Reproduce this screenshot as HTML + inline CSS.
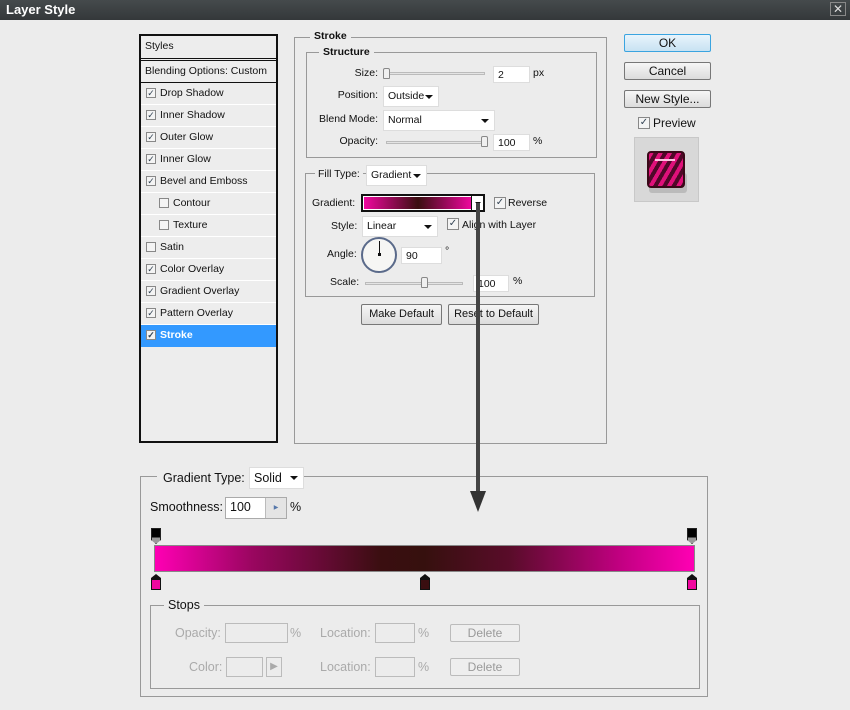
<!DOCTYPE html>
<html><head><style>
*{box-sizing:border-box;margin:0;padding:0;white-space:nowrap}
body{width:850px;height:710px;background:#ececec;font-family:"Liberation Sans",Tahoma,sans-serif;font-size:11px;color:#111;position:relative;overflow:hidden}
.a{position:absolute}
.title{left:0;top:0;width:850px;height:20px;background:linear-gradient(#454a4c,#34383a);color:#fff;font-weight:bold;font-size:13px;padding:2px 6px}
.close{right:4px;top:2px;width:16px;height:14px;border:1px solid #888;color:#ddd;font-size:12px;line-height:12px;text-align:center}
.list{left:139px;top:34px;width:139px;height:409px;border:2px solid #111;background:#ededed}
.row{position:absolute;left:0;width:135px;height:22px;border-bottom:1px solid #fff;font-size:10.5px;line-height:21px;padding-left:19px}
.cb{position:absolute;width:10px;height:10px;border:1px solid #888;background:#f4f4f4;font-size:9px;line-height:8px;color:#345;text-align:center}
.fs{border:1px solid #999}
.lg{position:absolute;background:#ececec;padding:0 4px;font-weight:bold;font-size:10.5px}
.lbl{position:absolute;font-size:10.5px;text-align:right}
.inp{position:absolute;background:#fff;border:1px solid #ddd;font-size:10.5px;padding:2px 4px;height:17px}
.sel{position:absolute;background:#fff;border:1px solid #ddd;font-size:10.5px;padding:3px 4px;height:21px}
.sel:after{content:"";position:absolute;right:5px;top:8px;border:4px solid transparent;border-top:4px solid #111;border-bottom:none}
.btn{position:absolute;border:1px solid #777;border-radius:2px;background:linear-gradient(#f6f6f6,#dcdcdc);font-size:11px;text-align:center}
.track{position:absolute;height:3px;border:1px solid #bbb;background:#e4e4e4}
.thumb{position:absolute;width:7px;height:11px;border:1px solid #888;border-radius:2px 2px 1px 1px;background:#f0f0f0}
.stop{position:absolute;width:10px;height:16px}
</style></head><body>
<div class="a title">Layer Style</div>
<div class="a close">✕</div>

<div class="a list">
 <div class="row" style="top:0;height:22px;padding-left:4px;border-bottom:3px double #111;height:25px">Styles</div>
 <div class="row" style="top:25px;padding-left:4px;border-bottom:1px solid #111">Blending Options: Custom</div>
 <div class="row" style="top:47px"><span class="cb" style="left:5px;top:5px">✓</span>Drop Shadow</div>
 <div class="row" style="top:69px"><span class="cb" style="left:5px;top:5px">✓</span>Inner Shadow</div>
 <div class="row" style="top:91px"><span class="cb" style="left:5px;top:5px">✓</span>Outer Glow</div>
 <div class="row" style="top:113px"><span class="cb" style="left:5px;top:5px">✓</span>Inner Glow</div>
 <div class="row" style="top:135px"><span class="cb" style="left:5px;top:5px">✓</span>Bevel and Emboss</div>
 <div class="row" style="top:157px;padding-left:32px"><span class="cb" style="left:18px;top:5px"></span>Contour</div>
 <div class="row" style="top:179px;padding-left:32px"><span class="cb" style="left:18px;top:5px"></span>Texture</div>
 <div class="row" style="top:201px"><span class="cb" style="left:5px;top:5px"></span>Satin</div>
 <div class="row" style="top:223px"><span class="cb" style="left:5px;top:5px">✓</span>Color Overlay</div>
 <div class="row" style="top:245px"><span class="cb" style="left:5px;top:5px">✓</span>Gradient Overlay</div>
 <div class="row" style="top:267px"><span class="cb" style="left:5px;top:5px">✓</span>Pattern Overlay</div>
 <div class="row" style="top:289px;background:#3399ff;color:#fff;font-weight:bold;border:none"><span class="cb" style="left:5px;top:5px">✓</span>Stroke</div>
</div>

<div class="a fs" style="left:294px;top:37px;width:313px;height:407px"></div>
<div class="lg" style="left:310px;top:30px">Stroke</div>
<div class="a fs" style="left:306px;top:52px;width:291px;height:106px"></div>
<div class="lg" style="left:319px;top:46px">Structure</div>
<div class="lbl" style="left:330px;top:67px;width:48px">Size:</div>
<div class="track" style="left:386px;top:72px;width:99px"></div>
<div class="thumb" style="left:383px;top:68px"></div>
<div class="inp" style="left:493px;top:66px;width:37px">2</div>
<div class="lbl" style="left:533px;top:67px">px</div>
<div class="lbl" style="left:320px;top:89px;width:58px">Position:</div>
<div class="sel" style="left:383px;top:86px;width:56px">Outside</div>
<div class="lbl" style="left:315px;top:113px;width:63px">Blend Mode:</div>
<div class="sel" style="left:383px;top:110px;width:112px">Normal</div>
<div class="lbl" style="left:320px;top:135px;width:58px">Opacity:</div>
<div class="track" style="left:386px;top:141px;width:99px"></div>
<div class="thumb" style="left:481px;top:136px"></div>
<div class="inp" style="left:493px;top:134px;width:37px">100</div>
<div class="lbl" style="left:533px;top:135px">%</div>

<div class="a fs" style="left:305px;top:173px;width:290px;height:124px"></div>
<div class="lbl" style="left:315px;top:168px;background:#ececec;padding:0 3px">Fill Type:</div>
<div class="sel" style="left:366px;top:165px;width:61px">Gradient</div>
<div class="lbl" style="left:312px;top:197px">Gradient:</div>
<div class="a" style="left:361px;top:194px;width:124px;height:18px;border:2px solid #111;background:#fff"><div style="position:absolute;left:1px;top:1px;width:108px;height:12px;background:linear-gradient(90deg,#f0079f,#3a0e10 50%,#f0079f)"></div><div style="position:absolute;right:0;top:0;width:12px;height:14px;border-left:1px solid #111"><div style="position:absolute;left:3px;top:6px;border:3px solid transparent;border-top:3px solid #111;border-bottom:none"></div></div></div>
<div class="cb" style="left:494px;top:197px;width:12px;height:12px;font-size:10px;line-height:10px">✓</div>
<div class="lbl" style="left:508px;top:197px">Reverse</div>
<div class="lbl" style="left:331px;top:220px">Style:</div>
<div class="sel" style="left:362px;top:216px;width:76px">Linear</div>
<div class="cb" style="left:447px;top:218px;width:12px;height:12px;font-size:10px;line-height:10px">✓</div>
<div class="lbl" style="left:462px;top:219px">Align with Layer</div>
<div class="lbl" style="left:327px;top:248px">Angle:</div>
<div class="a" style="left:361px;top:237px;width:36px;height:36px;border:2px solid #5a6a8a;border-radius:50%;background:#f6f6f4"></div>
<div class="a" style="left:379px;top:241px;width:1px;height:14px;background:#111"></div>
<div class="a" style="left:378px;top:253px;width:3px;height:3px;background:#111"></div>
<div class="inp" style="left:401px;top:247px;width:41px">90</div>
<div class="lbl" style="left:445px;top:245px">°</div>
<div class="lbl" style="left:330px;top:276px">Scale:</div>
<div class="track" style="left:365px;top:282px;width:98px"></div>
<div class="thumb" style="left:421px;top:277px"></div>
<div class="inp" style="left:473px;top:275px;width:36px">100</div>
<div class="lbl" style="left:513px;top:275px">%</div>
<div class="btn" style="left:361px;top:304px;width:81px;height:21px;line-height:19px">Make Default</div>
<div class="btn" style="left:448px;top:304px;width:91px;height:21px;line-height:19px">Reset to Default</div>

<div class="btn" style="left:624px;top:34px;width:87px;height:18px;border-color:#3aa4e0;background:linear-gradient(#e8f4fc,#c8e2f2);font-size:12px;line-height:16px">OK</div>
<div class="btn" style="left:624px;top:62px;width:87px;height:18px;font-size:12px;line-height:16px">Cancel</div>
<div class="btn" style="left:624px;top:90px;width:87px;height:18px;font-size:12px;line-height:16px">New Style...</div>
<div class="cb" style="left:638px;top:117px;width:12px;height:12px;font-size:10px;line-height:10px">✓</div>
<div class="lbl" style="left:653px;top:116px;font-size:12px">Preview</div>
<div class="a" style="left:634px;top:137px;width:65px;height:65px;background:#d8d8d8;border:1px solid #c8c8c8"></div>
<div class="a" style="left:649px;top:173px;width:38px;height:20px;background:#bbb;border-radius:3px"></div>
<div class="a" style="left:647px;top:151px;width:38px;height:37px;border-radius:4px;border:2px solid #3a0818;background:repeating-linear-gradient(120deg,#e0107a 0 4px,#500828 4px 8px)"></div>
<div class="a" style="left:655px;top:159px;width:20px;height:2px;background:#ffc0e0"></div>

<div class="a fs" style="left:140px;top:476px;width:568px;height:221px"></div>
<div class="lbl" style="left:157px;top:471px;background:#ececec;padding:0 6px;font-size:12.5px">Gradient Type:</div>
<div class="sel" style="left:249px;top:467px;width:55px;height:22px;font-size:12.5px">Solid</div>
<div class="lbl" style="left:150px;top:500px;font-size:12.5px">Smoothness:</div>
<div class="inp" style="left:225px;top:497px;width:62px;height:22px;font-size:12.5px;border-color:#aaa">100</div>
<div class="a" style="left:265px;top:498px;width:21px;height:20px;background:#e4e4e4;border-left:1px solid #bbb;font-size:6px;color:#57a;text-align:center;line-height:20px">▶</div>
<div class="lbl" style="left:290px;top:500px;font-size:12.5px">%</div>
<div class="a" style="left:154px;top:545px;width:541px;height:27px;border:1px solid #888;background:linear-gradient(90deg,#ff00b4,#9a0660 18%,#3a0e10 42%,#36100e 50%,#5a0c2a 66%,#c00080 86%,#ff00b4)"></div>
<div class="stop" style="left:151px;top:528px;border:1px solid #222;background:linear-gradient(#000 0 60%,#999 60%);clip-path:polygon(0 0,100% 0,100% 75%,50% 100%,0 75%)"></div>
<div class="stop" style="left:687px;top:528px;border:1px solid #222;background:linear-gradient(#000 0 60%,#999 60%);clip-path:polygon(0 0,100% 0,100% 75%,50% 100%,0 75%)"></div>
<div class="stop" style="left:151px;top:574px;background:#111;clip-path:polygon(50% 0,100% 25%,100% 100%,0 100%,0 25%)"><div style="position:absolute;left:1px;top:6px;width:8px;height:9px;background:#f0079f"></div></div>
<div class="stop" style="left:420px;top:574px;background:#111;clip-path:polygon(50% 0,100% 25%,100% 100%,0 100%,0 25%)"><div style="position:absolute;left:1px;top:6px;width:8px;height:9px;background:#3a0e10"></div></div>
<div class="stop" style="left:687px;top:574px;background:#111;clip-path:polygon(50% 0,100% 25%,100% 100%,0 100%,0 25%)"><div style="position:absolute;left:1px;top:6px;width:8px;height:9px;background:#f0079f"></div></div>

<div class="a fs" style="left:150px;top:605px;width:550px;height:84px"></div>
<div class="lbl" style="left:164px;top:598px;background:#ececec;padding:0 4px;font-size:12.5px">Stops</div>
<div class="lbl" style="left:175px;top:626px;font-size:12.5px;color:#aaa">Opacity:</div>
<div class="inp" style="left:225px;top:623px;width:63px;height:20px;border-color:#bbb;background:#ececec"></div>
<div class="lbl" style="left:290px;top:626px;font-size:12.5px;color:#aaa">%</div>
<div class="lbl" style="left:320px;top:626px;font-size:12.5px;color:#aaa">Location:</div>
<div class="inp" style="left:375px;top:623px;width:40px;height:20px;border-color:#bbb;background:#ececec"></div>
<div class="lbl" style="left:418px;top:626px;font-size:12.5px;color:#aaa">%</div>
<div class="btn" style="left:450px;top:624px;width:70px;height:18px;border-color:#bbb;color:#999;font-size:12px;line-height:16px;background:#eee">Delete</div>
<div class="lbl" style="left:189px;top:660px;font-size:12.5px;color:#aaa">Color:</div>
<div class="inp" style="left:226px;top:657px;width:37px;height:20px;border-color:#bbb;background:#ececec"></div>
<div class="a" style="left:266px;top:657px;width:16px;height:20px;border:1px solid #bbb;color:#aaa;font-size:10px;text-align:center;line-height:18px">▶</div>
<div class="lbl" style="left:320px;top:660px;font-size:12.5px;color:#aaa">Location:</div>
<div class="inp" style="left:375px;top:657px;width:40px;height:20px;border-color:#bbb;background:#ececec"></div>
<div class="lbl" style="left:418px;top:660px;font-size:12.5px;color:#aaa">%</div>
<div class="btn" style="left:450px;top:658px;width:70px;height:18px;border-color:#bbb;color:#999;font-size:12px;line-height:16px;background:#eee">Delete</div>

<svg class="a" style="left:465px;top:195px" width="30" height="325"><line x1="13" y1="8" x2="13" y2="300" stroke="#444" stroke-width="4"/><path d="M5 296 L21 296 L13 317 Z" fill="#333"/></svg>
</body></html>
